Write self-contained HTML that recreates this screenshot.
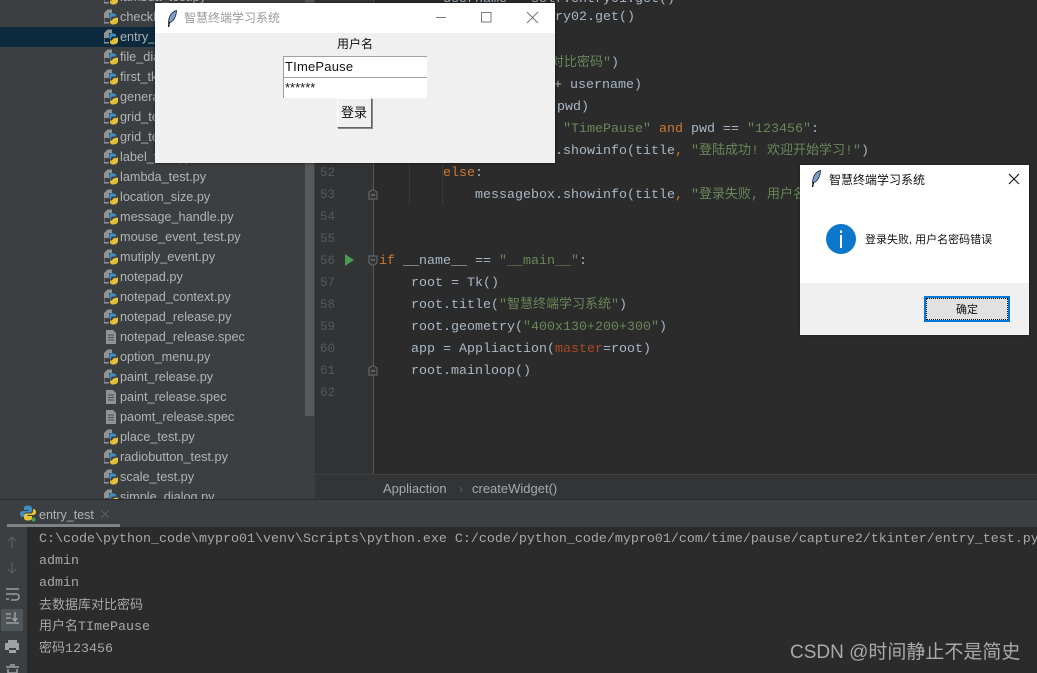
<!DOCTYPE html>
<html><head><meta charset="utf-8"><style>
html,body{margin:0;padding:0;width:1037px;height:673px;overflow:hidden;background:#2b2b2b}
*{box-sizing:border-box}
.a{position:absolute}
.f{position:absolute;left:120px;font:12.7px/20px "Liberation Sans","Noto Sans CJK SC",sans-serif;color:#b0b4b6;white-space:pre}
.i{position:absolute;left:104px;width:14px;height:16px}
.c{position:absolute;font:13.33px/22px "Liberation Mono","Noto Sans CJK SC",monospace;color:#a9b7c6;white-space:pre}
.n{position:absolute;left:320px;font:12.5px/22px "Liberation Mono",monospace;color:#55585a}
.k{color:#cc7832}.s{color:#6a8759}.p{color:#aa4926}
.h{font-size:13px}
.o{position:absolute;left:39px;font:13.33px/22px "Liberation Mono","Noto Sans CJK SC",monospace;color:#a8a8a8;white-space:pre}
.z{font-family:"Liberation Sans","Noto Sans CJK SC",sans-serif}
</style></head><body>
<svg width="0" height="0" style="position:absolute"><defs>
<symbol id="py" viewBox="0 0 14 16"><path d="M3.500 0.500H8V4H5V9H0.500V13H5V14.500H0V4z" fill="#8f9496"/><path d="M9 4.500C7 3.500 5.500 4.500 5.500 6V8.500C5.500 10 6 10.500 7 10.500V9C7 8 8 7.500 9 7.500H12V6C12 5 10.500 4.500 9 4.500z" fill="#3d8fc2"/><path d="M14 8.500V12C14 14.500 11.500 15.500 9 15.500C7 15.500 6 14.500 6 13V11.500C7 11.800 8 11.500 8.500 10.500C9 9.500 10 9 11 9H12.500V8.500z" fill="#e4bf3a"/></symbol>
<symbol id="sp" viewBox="0 0 14 16"><path d="M2 1h7l3 3v11H2z" fill="#8f9496"/><path d="M4 6h6M4 8.500h6M4 11h6" stroke="#4a4d4f" stroke-width="1"/></symbol>
<symbol id="fe" viewBox="0 0 12 18"><path d="M10.500 0.500C6 1.500 2.500 6 2.500 13L5 12C8.500 10 10.500 5 10.500 0.500z" fill="#7f9cc4" stroke="#26364f" stroke-width=".9"/><path d="M3.500 12L2.500 17" stroke="#111" stroke-width="1.400"/></symbol>
</defs></svg>

<!-- sidebar -->
<div class="a" style="left:0;top:0;width:315px;height:500px;background:#3c3f41;overflow:hidden">
<div class="a" style="left:0;top:27px;width:315px;height:20px;background:#0d293e"></div>
<div class="a" style="left:305px;top:0;width:9px;height:416px;background:#57595b"></div>
<svg class="i" style="top:-11px"><use href="#py"/></svg><div class="f" style="top:-13px">lambda_test.py</div>
<svg class="i" style="top:9px"><use href="#py"/></svg><div class="f" style="top:7px">checkbutton.py</div>
<svg class="i" style="top:29px"><use href="#py"/></svg><div class="f" style="top:27px">entry_test.py</div>
<svg class="i" style="top:49px"><use href="#py"/></svg><div class="f" style="top:47px">file_dialog.py</div>
<svg class="i" style="top:69px"><use href="#py"/></svg><div class="f" style="top:67px">first_tkinter.py</div>
<svg class="i" style="top:89px"><use href="#py"/></svg><div class="f" style="top:87px">generator.py</div>
<svg class="i" style="top:109px"><use href="#py"/></svg><div class="f" style="top:107px">grid_test.py</div>
<svg class="i" style="top:129px"><use href="#py"/></svg><div class="f" style="top:127px">grid_test2.py</div>
<svg class="i" style="top:149px"><use href="#py"/></svg><div class="f" style="top:147px">label_test.py</div>
<svg class="i" style="top:169px"><use href="#py"/></svg><div class="f" style="top:167px">lambda_test.py</div>
<svg class="i" style="top:189px"><use href="#py"/></svg><div class="f" style="top:187px">location_size.py</div>
<svg class="i" style="top:209px"><use href="#py"/></svg><div class="f" style="top:207px">message_handle.py</div>
<svg class="i" style="top:229px"><use href="#py"/></svg><div class="f" style="top:227px">mouse_event_test.py</div>
<svg class="i" style="top:249px"><use href="#py"/></svg><div class="f" style="top:247px">mutiply_event.py</div>
<svg class="i" style="top:269px"><use href="#py"/></svg><div class="f" style="top:267px">notepad.py</div>
<svg class="i" style="top:289px"><use href="#py"/></svg><div class="f" style="top:287px">notepad_context.py</div>
<svg class="i" style="top:309px"><use href="#py"/></svg><div class="f" style="top:307px">notepad_release.py</div>
<svg class="i" style="top:329px"><use href="#sp"/></svg><div class="f" style="top:327px">notepad_release.spec</div>
<svg class="i" style="top:349px"><use href="#py"/></svg><div class="f" style="top:347px">option_menu.py</div>
<svg class="i" style="top:369px"><use href="#py"/></svg><div class="f" style="top:367px">paint_release.py</div>
<svg class="i" style="top:389px"><use href="#sp"/></svg><div class="f" style="top:387px">paint_release.spec</div>
<svg class="i" style="top:409px"><use href="#sp"/></svg><div class="f" style="top:407px">paomt_release.spec</div>
<svg class="i" style="top:429px"><use href="#py"/></svg><div class="f" style="top:427px">place_test.py</div>
<svg class="i" style="top:449px"><use href="#py"/></svg><div class="f" style="top:447px">radiobutton_test.py</div>
<svg class="i" style="top:469px"><use href="#py"/></svg><div class="f" style="top:467px">scale_test.py</div>
<svg class="i" style="top:489px"><use href="#py"/></svg><div class="f" style="top:487px">simple_dialog.py</div>
</div>

<!-- gutter / editor -->
<div class="a" style="left:315px;top:0;width:58px;height:474px;background:#313335"></div>
<div class="a" style="left:373px;top:0;width:1px;height:474px;background:#555"></div>
<div class="a" style="left:409px;top:150px;width:1px;height:55px;background:#3a3a3a"></div>
<div class="a" style="left:442px;top:150px;width:1px;height:55px;background:#3a3a3a"></div>
<div class="n" style="top:162px">52</div><div class="n" style="top:184px">53</div><div class="n" style="top:206px">54</div><div class="n" style="top:228px">55</div><div class="n" style="top:250px">56</div><div class="n" style="top:272px">57</div><div class="n" style="top:294px">58</div><div class="n" style="top:316px">59</div><div class="n" style="top:338px">60</div><div class="n" style="top:360px">61</div><div class="n" style="top:382px">62</div>
<svg class="a" style="left:345px;top:254px" width="10" height="12"><path d="M0 0L9 6L0 12z" fill="#499c54"/></svg>
<svg class="a" style="left:368px;top:189px" width="10" height="11"><path d="M1 3L5 0.500L9 3V10H1z" fill="#313335" stroke="#6b6e70"/><path d="M3 6H7" stroke="#8a8d8f"/></svg>
<svg class="a" style="left:368px;top:255px" width="10" height="11"><path d="M1 1H9V8L5 10.500L1 8z" fill="#313335" stroke="#6b6e70"/><path d="M3 5H7" stroke="#8a8d8f"/></svg>
<svg class="a" style="left:368px;top:365px" width="10" height="11"><path d="M1 3L5 0.500L9 3V10H1z" fill="#313335" stroke="#6b6e70"/><path d="M3 6H7" stroke="#8a8d8f"/></svg>

<div class="c" style="left:443px;top:-11px">username = self.entry01.get()</div>
<div class="c" style="left:443px;top:7px">pwd = self.entry02.get()</div>
<div class="c" style="left:443px;top:52px">print(<span class="s">"<span class="h">去数据库对比密码</span>"</span>)</div>
<div class="c" style="left:443px;top:74px">print(<span class="s">"<span class="h">用户名</span>"</span> + username)</div>
<div class="c" style="left:443px;top:96px">print(<span class="s">"<span class="h">密码</span>"</span> + pwd)</div>
<div class="c" style="left:443px;top:119px"><span class="k">if</span> username == <span class="s">"TimePause"</span> <span class="k">and</span> pwd == <span class="s">"123456"</span>:</div>
<div class="c" style="left:475px;top:140px">messagebox.showinfo(title<span class="k">,</span> <span class="s">"<span class="h">登陆成功</span>! <span class="h">欢迎开始学习</span>!"</span>)</div>
<div class="c" style="left:443px;top:163px"><span class="k">else</span>:</div>
<div class="c" style="left:475px;top:184px">messagebox.showinfo(title<span class="k">,</span> <span class="s">"<span class="h">登录失败</span>, <span class="h">用户名密码错误</span>"</span>)</div>
<div class="c" style="left:379px;top:251px"><span class="k">if</span> __name__ == <span class="s">"__main__"</span>:</div>
<div class="c" style="left:411px;top:273px">root = Tk()</div>
<div class="c" style="left:411px;top:294px">root.title(<span class="s">"<span class="h">智慧终端学习系统</span>"</span>)</div>
<div class="c" style="left:411px;top:317px">root.geometry(<span class="s">"400x130+200+300"</span>)</div>
<div class="c" style="left:411px;top:339px">app = Appliaction(<span class="p">master</span>=root)</div>
<div class="c" style="left:411px;top:361px">root.mainloop()</div>

<!-- breadcrumb -->
<div class="a" style="left:315px;top:474px;width:722px;height:26px;background:#323436;border-top:1px solid #3e4042"></div>
<div class="a z" style="left:383px;top:481px;font-size:13px;line-height:16px;color:#a7aaac">Appliaction</div>
<div class="a z" style="left:459px;top:481px;font-size:12px;line-height:16px;color:#5f6264">›</div>
<div class="a z" style="left:472px;top:481px;font-size:13px;line-height:16px;color:#a7aaac">createWidget()</div>

<!-- run panel -->
<div class="a" style="left:0;top:499px;width:1037px;height:1px;background:#2a2c2d"></div>
<div class="a" style="left:0;top:500px;width:1037px;height:27px;background:#3c3f41"></div>
<div class="a" style="left:7px;top:524px;width:113px;height:3px;background:#7f8385"></div>
<svg class="a" style="left:20px;top:505px" width="16" height="17" viewBox="0 0 16 17"><path d="M8 0.500C4.500 0.500 4 2 4 3.500V5H8.500V6H2.500C1 6 0 7.500 0 9S1 12 2.500 12H4V10C4 8.500 5 7.500 6.500 7.500H10C11 7.500 12 6.500 12 5.500V3C12 1.500 10.500 0.500 8 0.500z" fill="#3d8fc2"/><path d="M8 15.500C11.500 15.500 12 14 12 12.500V11H7.500V10H13.500C15 10 16 8.500 16 7S15 4 13.500 4H13V6C13 7.500 12 8.500 10.500 8.500H6C5 8.500 4 9.500 4 10.500V13C4 14.500 5.500 15.500 8 15.500z" fill="#e8c43c"/><circle cx="13.500" cy="14.500" r="2" fill="#3aa655"/></svg>
<div class="a z" style="left:39px;top:507px;font-size:12.5px;line-height:16px;color:#b0b3b5">entry_test</div>
<svg class="a" style="left:101px;top:510px" width="8" height="8"><path d="M0 0L8 8M8 0L0 8" stroke="#5d6062"/></svg>
<div class="a" style="left:0;top:527px;width:27px;height:146px;background:#3c3f41"></div>
<svg class="a" style="left:0;top:527px" width="27" height="146" fill="none">
<path d="M12 10V21M8 14L12 10L16 14" stroke="#55585a" stroke-width="1.500"/>
<path d="M12 35V46M8 42L12 46L16 42" stroke="#55585a" stroke-width="1.500"/>
<path d="M6 62H19M6 67H16Q19 67 19 70T15 73H11M6 72H9" stroke="#9a9d9f" stroke-width="1.500"/>
<rect x="1" y="82" width="22" height="22" rx="2" fill="#50555a"/>
<path d="M6 87H11M6 91H11M6 96H19M15 85V93M12.500 91L15 94L17.500 91" stroke="#a9acae" stroke-width="1.300"/>
<path d="M8 113H17V116H8zM5 116H19V123H16V121H9V123H5zM9 123H16V126H9z" fill="#a0a3a5"/>
<path d="M6 140H19M10 138H15M8 142V146H17V142" stroke="#a0a3a5" stroke-width="1.500"/>
</svg>

<div class="o" style="top:529px">C:\code\python_code\mypro01\venv\Scripts\python.exe C:/code/python_code/mypro01/com/time/pause/capture2/tkinter/entry_test.py</div>
<div class="o" style="top:551px">admin</div>
<div class="o" style="top:573px">admin</div>
<div class="o" style="top:595px"><span class="h">去数据库对比密码</span></div>
<div class="o" style="top:616px"><span class="h">用户名</span>TImePause</div>
<div class="o" style="top:638px"><span class="h">密码</span>123456</div>

<div class="a" style="left:790px;top:640px;font:19px/26px 'Liberation Sans','Noto Sans CJK SC',sans-serif;color:#a9a9a9;white-space:pre">CSDN @时间静止不是简史</div>

<!-- tk window -->
<div class="a" style="left:155px;top:3px;width:400px;height:160px;background:#f0f0f0;box-shadow:0 0 3px rgba(0,0,0,.6)">
<div class="a" style="left:0;top:0;width:400px;height:30px;background:#fff"></div>
<svg class="a" style="left:11px;top:7px" width="12" height="18"><use href="#fe"/></svg>
<div class="a z" style="left:29px;top:7px;font-size:12px;line-height:16px;color:#999;white-space:pre">智慧终端学习系统</div>
<svg class="a" style="left:280px;top:5px" width="110" height="20" fill="none" stroke="#777"><path d="M1 9.500H11"/><rect x="46.500" y="4.500" width="9.500" height="9.500"/><path d="M92 4L103 15M103 4L92 15"/></svg>
<div class="a z" style="left:0;top:33px;width:400px;text-align:center;font-size:12px;line-height:16px;color:#111">用户名</div>
<div class="a" style="left:128px;top:53px;width:144px;height:21px;background:#fff;border-left:1px solid #a0a0a0;border-top:1px solid #a0a0a0"></div>
<div class="a z" style="left:130px;top:55px;font-size:13px;line-height:17px;color:#111;letter-spacing:.2px">TImePause</div>
<div class="a" style="left:128px;top:74px;width:144px;height:21px;background:#fff;border-left:1px solid #a0a0a0;border-top:1px solid #a0a0a0"></div>
<div class="a z" style="left:130px;top:77px;font-size:13px;line-height:15px;color:#111">******</div>
<div class="a z" style="left:182px;top:95px;width:35px;height:30px;background:#f0f0f0;border:1px solid;border-color:#fff #666 #666 #fff;box-shadow:1px 1px 0 #888;text-align:center;font-size:13px;line-height:27px;color:#111;text-indent:-1px">登录</div>
</div>

<!-- dialog -->
<div class="a" style="left:800px;top:165px;width:229px;height:170px;background:#fff;box-shadow:0 0 2px rgba(0,0,0,.5)">
<svg class="a" style="left:10px;top:5px" width="12" height="18"><use href="#fe"/></svg>
<div class="a z" style="left:29px;top:7px;font-size:12px;line-height:16px;color:#111;white-space:pre">智慧终端学习系统</div>
<svg class="a" style="left:208px;top:8px" width="12" height="12" fill="none" stroke="#111" stroke-width="1.100"><path d="M1 1L11 11M11 1L1 11"/></svg>
<svg class="a" style="left:26px;top:59px" width="30" height="30"><circle cx="15" cy="15" r="15" fill="#0c78cc"/><rect x="14" y="11" width="2" height="13" fill="#fff"/><rect x="14" y="6.500" width="2" height="2.500" fill="#fff"/></svg>
<div class="a z" style="left:65px;top:68px;font-size:11px;line-height:15px;color:#111;white-space:pre">登录失败, 用户名密码错误</div>
<div class="a" style="left:0;top:118px;width:229px;height:52px;background:#f0f0f0"></div>
<div class="a" style="left:124px;top:131px;width:86px;height:26px;background:#e1e1e1;border:2px solid #0078d7"></div>
<div class="a z" style="left:126px;top:133px;width:82px;height:22px;border:1px dotted #111;text-align:center;font-size:11px;line-height:22px;color:#111">确定</div>
</div>
</body></html>
